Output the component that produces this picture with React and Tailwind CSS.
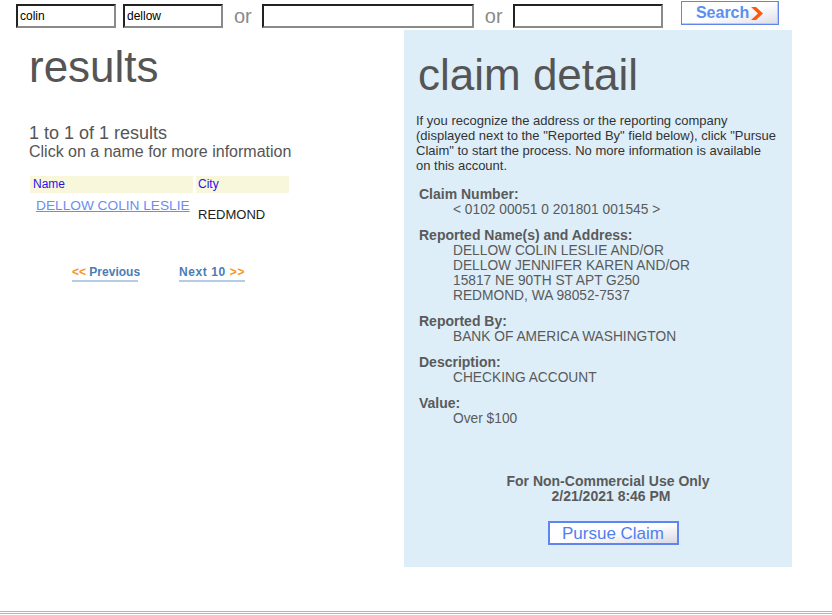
import React from 'react';

const fields = [
  { label: 'Claim Number:', lines: ['< 0102 00051 0 201801 001545 >'] },
  {
    label: 'Reported Name(s) and Address:',
    lines: [
      'DELLOW COLIN LESLIE AND/OR',
      'DELLOW JENNIFER KAREN AND/OR',
      '15817 NE 90TH ST APT G250',
      'REDMOND, WA 98052-7537',
    ],
  },
  { label: 'Reported By:', lines: ['BANK OF AMERICA WASHINGTON'] },
  { label: 'Description:', lines: ['CHECKING ACCOUNT'] },
  { label: 'Value:', lines: ['Over $100'] },
];

function Field({ value, width }) {
  return (
    <div
      className={`${width} h-[24px] mt-[3px] border-2 border-t-[#222] border-l-[#222] border-b-[#8a8a8a] border-r-[#8a8a8a] bg-white px-[2px] text-[12px] leading-[20px] text-black`}
    >
      {value}
    </div>
  );
}

function Or() {
  return <span className="mt-[5px] text-[20px] leading-[20px] text-[#8a8a8a]">or</span>;
}

export default function App() {
  return (
    <div className="w-[832px] h-[615px] bg-white font-['Liberation_Sans',Arial,sans-serif] overflow-hidden">
      {/* search bar */}
      <div className="flex items-start h-[30px] pt-[1px] pl-[16px]">
        <Field value="colin" width="w-[100px]" />
        <div className="ml-[7px]">
          <Field value="dellow" width="w-[100px]" />
        </div>
        <div className="ml-[11px] mr-[10px] flex">
          <Or />
        </div>
        <Field value="" width="w-[212px]" />
        <div className="ml-[11px] mr-[10px] flex">
          <Or />
        </div>
        <Field value="" width="w-[150px]" />
        <button className="ml-[18px] w-[98px] h-[24px] border border-[#5f86ee] bg-gradient-to-br from-white via-white to-[#dcdce8] shadow-[inset_-1px_-1px_0_#c8c8d8] flex items-center justify-center gap-[2px]">
          <span className="text-[16px] font-bold text-[#5b8ff0] leading-none">Search</span>
          <svg width="12" height="13" viewBox="0 0 12 13">
            <polygon points="0,0 5,0 12,6.5 5,13 0,13 7,6.5" fill="#ff5a0a" />
          </svg>
        </button>
      </div>

      <div className="flex">
        {/* results column */}
        <div className="w-[404px] pl-[29px]">
          <h1 className="mt-[15px] text-[44px] leading-none text-[#555]">results</h1>
          <p className="mt-[35px] text-[18px] leading-[18px] text-[#555]">1 to 1 of 1 results</p>
          <p className="mt-[1px] text-[16px] leading-[18px] text-[#555]">Click on a name for more information</p>

          <div className="mt-[15px] ml-[1px] w-[260px]">
            <div className="flex gap-[3px] text-[12px] leading-[17px] text-[#2a10f0]">
              <div className="w-[163px] bg-[#f8f7dc] pl-[3px]">Name</div>
              <div className="w-[93px] bg-[#f8f7dc] pl-[2px]">City</div>
            </div>
            <div className="flex gap-[3px]">
              <div className="w-[163px] pl-[6px]">
                <a href="#" className="text-[13.7px] leading-[16px] text-[#6b8df2] underline">
                  DELLOW COLIN LESLIE
                </a>
              </div>
              <div className="w-[93px] pl-[2px] pt-[14px] text-[13px] leading-[15px] text-[#222]">REDMOND</div>
            </div>
          </div>

          <div className="flex items-end mt-[44px] ml-[43px] text-[12px] font-bold leading-[13px]">
            <a href="#" className="w-[66px] whitespace-nowrap border-b-2 border-[#b4cde4] pb-px">
              <span className="text-[#f7941d]">&lt;&lt;</span> <span className="text-[#4a7db3]">Previous</span>
            </a>
            <a href="#" className="ml-[41px] whitespace-nowrap border-b-2 border-[#b4cde4] pb-px tracking-[0.6px]">
              <span className="text-[#4a7db3]">Next 10</span> <span className="text-[#f7941d]">&gt;&gt;</span>
            </a>
          </div>
        </div>

        {/* claim detail panel */}
        <div className="w-[388px] h-[537px] bg-[#ddeef9] pl-[12px] pr-[2px]">
          <h2 className="mt-[23px] ml-[2px] text-[44px] leading-none text-[#555]">claim detail</h2>
          <p className="mt-[16px] whitespace-nowrap text-[13px] leading-[15px] text-[#333]">
            If you recognize the address or the reporting company
            <br />
            (displayed next to the "Reported By" field below), click "Pursue
            <br />
            Claim" to start the process. No more information is available
            <br />
            on this account.
          </p>

          <div className="mt-[13px] ml-[3px]">
            {fields.map((f, i) => (
              <div key={f.label} className={i ? 'mt-[10px]' : ''}>
                <div className="text-[14px] font-bold leading-[16px] text-[#5a5a5a]">{f.label}</div>
                {f.lines.map((l) => (
                  <div key={l} className="pl-[34px] text-[13.75px] leading-[15px] text-[#5a5a5a]">
                    {l}
                  </div>
                ))}
              </div>
            ))}
          </div>

          <div className="mt-[48px] pl-[10px] text-center text-[14px] font-bold leading-[15px] text-[#5a5a5a]">
            <div>For Non-Commercial Use Only</div>
            <div className="pl-[6px]">2/21/2021 8:46 PM</div>
          </div>
          <div className="mt-[17px] flex justify-center pl-[20px]">
            <button className="w-[131px] h-[24px] border-2 border-[#5f86ee] bg-gradient-to-br from-white via-white to-[#d8d8e4] text-[17px] leading-none text-[#4f80f0]">
              Pursue Claim
            </button>
          </div>
        </div>
      </div>

      <div className="mt-[44px] border-t border-[#f5b12a]" />
      <div className="mt-[1px] border-t border-[#f5b12a]" />
    </div>
  );
}
